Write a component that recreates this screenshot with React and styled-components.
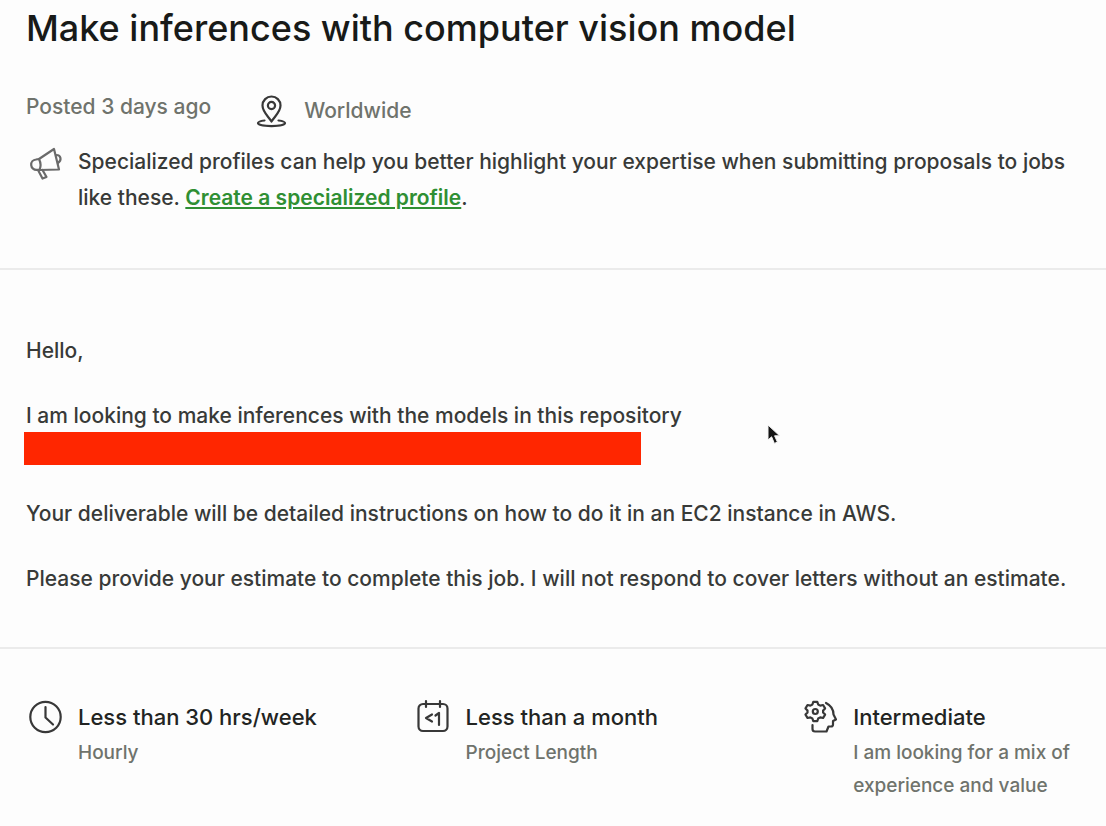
import React from "react"
import styled, { createGlobalStyle } from "styled-components"

const terms = [
  { icon: "clock", title: "Less than 30 hrs/week", text: "Hourly" },
  { icon: "calendar", title: "Less than a month", text: "Project Length" },
  {
    icon: "expertise",
    title: "Intermediate",
    text: "I am looking for a mix of experience and value",
  },
]

const App = () => {
  return (
    <Page>
      <GlobalStyle />
      <Header>
        <Title>Make inferences with computer vision model</Title>
        <Meta>
          <span>Posted 3 days ago</span>
          <Location>
            <Icon name="pin" />
            <span>Worldwide</span>
          </Location>
        </Meta>
        <Note>
          <Icon name="megaphone" />
          <p>
            Specialized profiles can help you better highlight your expertise
            when submitting proposals to jobs like these.{" "}
            <ProfileLink href="#profile">
              Create a specialized profile
            </ProfileLink>
            .
          </p>
        </Note>
      </Header>

      <Description>
        <p>Hello,</p>
        <div>
          <p>I am looking to make inferences with the models in this repository</p>
          <Redacted />
        </div>
        <p>
          Your deliverable will be detailed instructions on how to do it in an
          EC2 instance in AWS.
        </p>
        <p>
          Please provide your estimate to complete this job. I will not respond
          to cover letters without an estimate.
        </p>
        <Pointer viewBox="0 0 14 22" aria-hidden="true">
          <path d="M1 1v15l3.6-3.2 2.8 6.6 3-1.3-2.8-6.3h5z" />
        </Pointer>
      </Description>

      <Terms>
        {terms.map(({ icon, title, text }) => (
          <Term key={title}>
            <Icon name={icon} />
            <div>
              <TermTitle>{title}</TermTitle>
              <TermText>{text}</TermText>
            </div>
          </Term>
        ))}
      </Terms>
    </Page>
  )
}

const Icon = ({ name }) => {
  return (
    <IconSvg viewBox="0 0 38 38" $muted={name === "megaphone"} aria-hidden="true">
      {name === "clock" && (
        <>
          <circle cx="19.5" cy="19" r="15.2" />
          <path d="M19.500 9v10.500l7.500 7" />
        </>
      )}
      {name === "calendar" && (
        <>
          <rect x="4.500" y="6" width="29" height="27" rx="4.500" />
          <path d="M12 3v6M26 3v6" />
          <path d="M18 16.500l-6 3.500 6 3.500M21.500 17.500l3.500-2.500v12" />
        </>
      )}
      {name === "expertise" && (
        <>
          <path d="M12.300 3.800h4l.9 2.700 2 1.100 2.900-.6 2 3.400-2 2.200v1.800l2 2.200-2 3.400-2.900-.6-2 1.100-.9 2.700h-4l-.9-2.700-2-1.100-2.900.6-2-3.400 2-2.200v-1.800l-2-2.200 2-3.400 2.900.6 2-1.100z" />
          <circle cx="14.300" cy="13.500" r="2.500" />
          <path d="M25 5c5 2.500 7.500 6.500 7.500 11.500l2.500 5-3 1.500v3.500q0 2-2 2h-2.500l-2 5H14q-2.500 0-2.500-2.500V27" />
        </>
      )}
      {name === "pin" && (
        <>
          <path d="M19.500 29.500c-3-5-9-9.500-9-16a9 9 0 0 1 18 0c0 6.500-6 11-9 16z" />
          <circle cx="19.500" cy="13.500" r="3.600" />
          <path d="M12.500 28.500c-4 .5-6.500 1.300-6.500 2.600 0 1.900 6 3 13.500 3S33 33 33 31.100c0-1.300-2.500-2.100-6.500-2.600" />
        </>
      )}
      {name === "megaphone" && (
        <>
          <path d="M13 15L28 5l5 20.500-19.500.5" />
          <path d="M13 15l-3 .5a5.200 5.200 0 0 0 .8 10.400l2.700.1c1.500-3.500 1-8-.5-11z" />
          <path d="M12 26l4.500 8.500 4-1.500-4-7M30.500 11c4.500 0 5.500 5.500 1.500 8" />
        </>
      )}
    </IconSvg>
  )
}

const GlobalStyle = createGlobalStyle`
  * {
    box-sizing: border-box;
  }
  body {
    margin: 0;
    background: #fdfdfd;
    color: #383a38;
    font-family: Inter, "Liberation Sans", sans-serif;
    font-size: 21px;
    font-weight: 450;
  }
  h1, h2, p {
    margin: 0;
  }
`

const Page = styled.main`
  width: 100%;
`

const Header = styled.header`
  padding: 6px 26px 52px;
  border-bottom: 2px solid #ebebeb;
`

const Title = styled.h1`
  font-size: 36px;
  font-weight: 500;
  line-height: 44px;
  color: #181a18;
`

const Meta = styled.div`
  display: flex;
  align-items: flex-start;
  gap: 41px;
  margin-top: 40px;
  line-height: 34px;
  color: #6f736c;
`

const Location = styled.div`
  display: flex;
  align-items: center;
  gap: 14px;
  padding-top: 2px;
  font-weight: 500;
`

const Note = styled.div`
  display: flex;
  align-items: flex-start;
  gap: 14px;
  margin-top: 14px;
  line-height: 36px;
`

const ProfileLink = styled.a`
  color: #2f8f33;
  font-weight: 600;
  text-decoration: underline;
`

const Description = styled.section`
  position: relative;
  display: flex;
  flex-direction: column;
  gap: 32px;
  padding: 64px 26px 52px;
  border-bottom: 2px solid #ebebeb;
  line-height: 33px;
`

const Redacted = styled.div`
  width: 58.5%;
  height: 33px;
  margin-left: -2px;
  background: #ff2600;
`

const Pointer = styled.svg`
  position: absolute;
  left: 767px;
  top: 154px;
  width: 14px;
  height: 22px;
  fill: #141414;
  stroke: #f4f4f4;
`

const Terms = styled.section`
  display: grid;
  grid-template-columns: 7fr 7fr 5fr;
  padding: 49px 28px 24px 26px;
`

const Term = styled.div`
  display: flex;
  align-items: flex-start;
  gap: 14px;
`

const TermTitle = styled.h2`
  font-size: 22px;
  font-weight: 500;
  line-height: 38px;
  color: #222422;
`

const TermText = styled.p`
  font-size: 19px;
  line-height: 33px;
  color: #6f736c;
`

const IconSvg = styled.svg`
  flex: none;
  width: 38px;
  height: 38px;
  fill: none;
  stroke: ${({ $muted }) => ($muted ? "#6a6a6a" : "#383838")};
  stroke-width: 2.2;
  stroke-linecap: round;
  stroke-linejoin: round;
`

export default App
